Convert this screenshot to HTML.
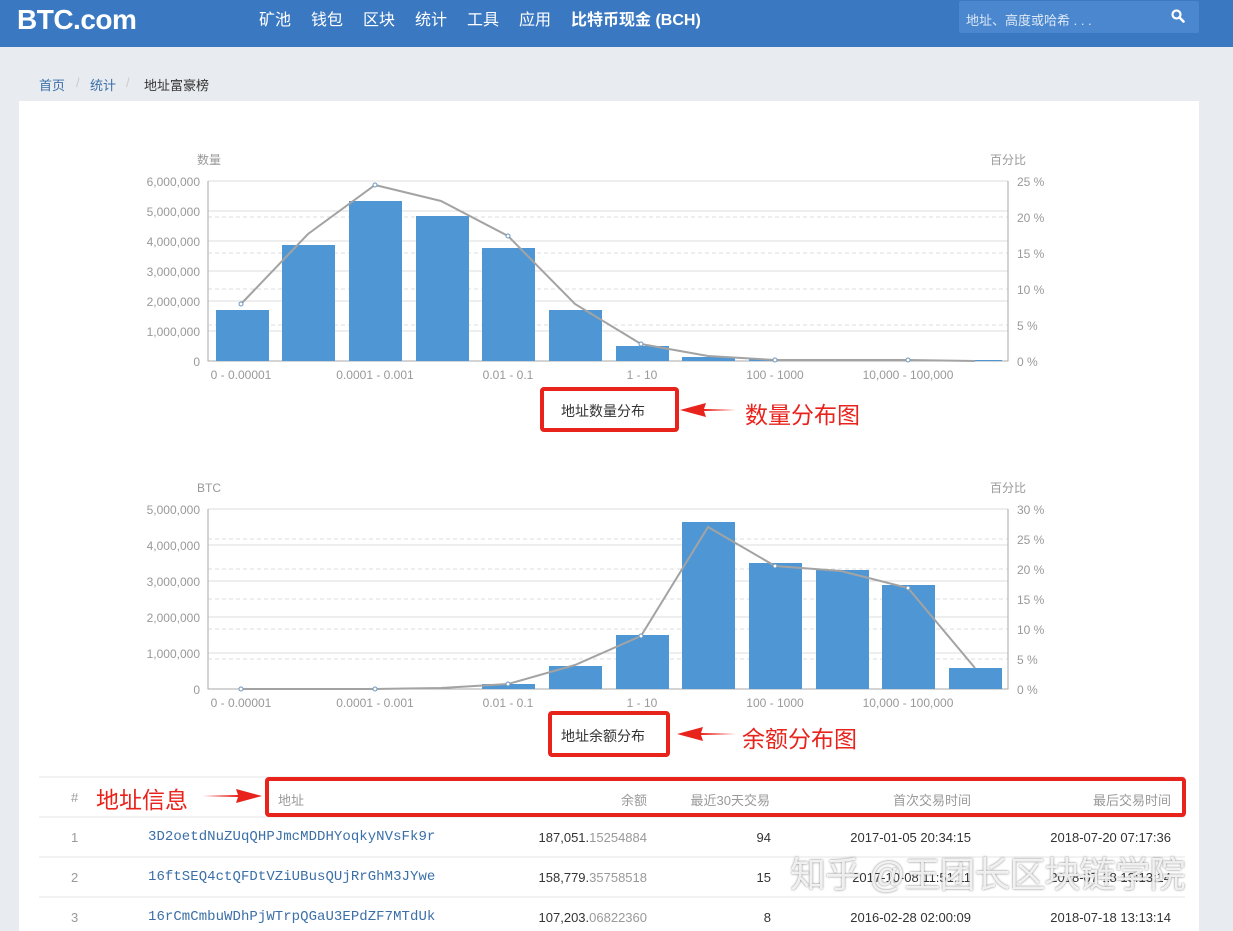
<!DOCTYPE html>
<html><head><meta charset="utf-8"><style>
*{margin:0;padding:0;box-sizing:border-box}
body{width:1233px;height:918px;overflow:hidden;background:#e8ebef;font-family:"Liberation Sans","Noto Sans CJK SC",sans-serif;position:relative}
.hdr{position:absolute;left:0;top:0;width:1233px;height:47px;background:#3b78c2}
.logo{position:absolute;left:17px;top:4px;color:#fff;font-weight:bold;font-size:28px;letter-spacing:-0.5px}
.nav{position:absolute;top:6px;color:#fff;font-size:16px}
.search{position:absolute;left:959px;top:1px;width:240px;height:32px;background:#4a87cf;border-radius:2px;color:#dde8f5;font-size:13px;padding:9px 0 0 7px}
.bc{position:absolute;top:75px;font-size:13px}
.card{position:absolute;left:19px;top:101px;width:1180px;height:830px;background:#fff}
.t{position:absolute;font-size:13px;color:#333;white-space:nowrap}
.r{text-align:right}
.red{position:absolute;border:4px solid #e8231c;border-radius:4px}
.rt{position:absolute;color:#e8231c;font-size:23px}
.g{color:#999}
.addr{color:#3b6fa8;font-family:"Liberation Mono",monospace;font-size:14px;letter-spacing:0.05px}
</style></head><body>
<div class="hdr">
<div class="logo">BTC.com</div>
<div class="nav" style="left:259px">矿池</div>
<div class="nav" style="left:311px">钱包</div>
<div class="nav" style="left:363px">区块</div>
<div class="nav" style="left:415px">统计</div>
<div class="nav" style="left:467px">工具</div>
<div class="nav" style="left:519px">应用</div>
<div class="nav" style="left:571px;font-weight:bold">比特币现金 (BCH)</div>
<div class="search">地址、高度或哈希 . . .
<svg style="position:absolute;left:212px;top:8px" width="14" height="14" viewBox="0 0 14 14"><circle cx="5.5" cy="5.5" r="4" fill="none" stroke="#fff" stroke-width="2.2"/><path d="M8.5 8.5L12.5 12.5" stroke="#fff" stroke-width="2.6" stroke-linecap="round"/></svg></div>
</div>
<div class="bc" style="left:39px;color:#3b6fa8">首页</div>
<div class="bc" style="left:76px;color:#ccc">/</div>
<div class="bc" style="left:90px;color:#3b6fa8">统计</div>
<div class="bc" style="left:126px;color:#ccc">/</div>
<div class="bc" style="left:144px;color:#333">地址富豪榜</div>
<div class="card"></div>

<svg style="position:absolute;left:0;top:0" width="1233" height="918" font-family="Liberation Sans, Noto Sans CJK SC, sans-serif" font-size="12" fill="#999">
<text x="197" y="164">数量</text><text x="990" y="164">百分比</text>
<g stroke="#ddd"><path d="M208 181H1008M208 211H1008M208 241H1008M208 271H1008M208 301H1008M208 331H1008"/></g>
<g stroke="#ddd" stroke-dasharray="4 3"><path d="M208 217H1008M208 253H1008M208 289H1008M208 325H1008"/></g>
<path d="M208 181V361H1008V181" stroke="#aaa" fill="none"/>
<g text-anchor="end"><text x="200" y="186">6,000,000</text><text x="200" y="216">5,000,000</text><text x="200" y="246">4,000,000</text><text x="200" y="276">3,000,000</text><text x="200" y="306">2,000,000</text><text x="200" y="336">1,000,000</text><text x="200" y="366">0</text></g>
<g><text x="1017" y="186">25 %</text><text x="1017" y="222">20 %</text><text x="1017" y="258">15 %</text><text x="1017" y="294">10 %</text><text x="1017" y="330">5 %</text><text x="1017" y="366">0 %</text></g>
<g fill="#4f97d4"><rect x="216" y="310" width="53" height="51"/><rect x="282" y="245" width="53" height="116"/><rect x="349" y="201" width="53" height="160"/><rect x="416" y="216" width="53" height="145"/><rect x="482" y="248" width="53" height="113"/><rect x="549" y="310" width="53" height="51"/><rect x="616" y="346" width="53" height="15"/><rect x="682" y="357" width="53" height="4"/><rect x="749" y="359" width="53" height="2"/><rect x="816" y="360" width="53" height="1"/><rect x="882" y="360" width="53" height="1"/><rect x="949" y="360" width="53" height="1"/></g>
<polyline points="241,304 308,234 375,185 441,201 508,236 575,304 641,344 708,356 775,360 841,360 908,360 975,361" fill="none" stroke="#a3a3a3" stroke-width="2"/>
<g fill="#fff" stroke="#6a95bd"><circle cx="241" cy="304" r="2"/><circle cx="375" cy="185" r="2"/><circle cx="508" cy="236" r="2"/><circle cx="641" cy="344" r="2"/><circle cx="775" cy="360" r="2"/><circle cx="908" cy="360" r="2"/></g>
<g text-anchor="middle"><text x="241" y="379">0 - 0.00001</text><text x="375" y="379">0.0001 - 0.001</text><text x="508" y="379">0.01 - 0.1</text><text x="642" y="379">1 - 10</text><text x="775" y="379">100 - 1000</text><text x="908" y="379">10,000 - 100,000</text></g>
<text x="197" y="492">BTC</text><text x="990" y="492">百分比</text>
<g stroke="#ddd"><path d="M208 509H1008M208 545H1008M208 581H1008M208 617H1008M208 653H1008"/></g>
<g stroke="#ddd" stroke-dasharray="4 3"><path d="M208 539H1008M208 569H1008M208 599H1008M208 629H1008M208 659H1008"/></g>
<path d="M208 509V689H1008V509" stroke="#aaa" fill="none"/>
<g text-anchor="end"><text x="200" y="514">5,000,000</text><text x="200" y="550">4,000,000</text><text x="200" y="586">3,000,000</text><text x="200" y="622">2,000,000</text><text x="200" y="658">1,000,000</text><text x="200" y="694">0</text></g>
<g><text x="1017" y="514">30 %</text><text x="1017" y="544">25 %</text><text x="1017" y="574">20 %</text><text x="1017" y="604">15 %</text><text x="1017" y="634">10 %</text><text x="1017" y="664">5 %</text><text x="1017" y="694">0 %</text></g>
<g fill="#4f97d4"><rect x="482" y="684" width="53" height="5"/><rect x="549" y="666" width="53" height="23"/><rect x="616" y="635" width="53" height="54"/><rect x="682" y="522" width="53" height="167"/><rect x="749" y="563" width="53" height="126"/><rect x="816" y="570" width="53" height="119"/><rect x="882" y="585" width="53" height="104"/><rect x="949" y="668" width="53" height="21"/></g>
<polyline points="241,689 308,689 375,689 441,688 508,684 575,665 641,636 708,527 775,566 841,571 908,588 975,668" fill="none" stroke="#a3a3a3" stroke-width="2"/>
<g fill="#fff" stroke="#6a95bd"><circle cx="241" cy="689" r="2"/><circle cx="375" cy="689" r="2"/><circle cx="508" cy="684" r="2"/><circle cx="641" cy="636" r="2"/><circle cx="775" cy="566" r="2"/><circle cx="908" cy="588" r="2"/></g>
<g text-anchor="middle"><text x="241" y="707">0 - 0.00001</text><text x="375" y="707">0.0001 - 0.001</text><text x="508" y="707">0.01 - 0.1</text><text x="642" y="707">1 - 10</text><text x="775" y="707">100 - 1000</text><text x="908" y="707">10,000 - 100,000</text></g>
<g fill="#e8231c"><path d="M680 410L706 403L704 409L736 410L704 411L706 417Z"/><path d="M677 734L703 727L701 733L736 734L701 735L703 741Z"/><path d="M262 796L236 789L238 795L203 796L238 797L236 803Z"/></g>
<g stroke="#e6e6e6"><path d="M39 777H1185M39 817H1185M39 857H1185M39 897H1185"/></g>
</svg>

<div class="red" style="left:540px;top:387px;width:139px;height:45px"></div>
<div class="t" style="left:561px;top:401px;font-size:14px">地址数量分布</div>
<div class="rt" style="left:745px;top:396px">数量分布图</div>
<div class="red" style="left:548px;top:711px;width:122px;height:46px"></div>
<div class="t" style="left:561px;top:726px;font-size:14px">地址余额分布</div>
<div class="rt" style="left:742px;top:720px">余额分布图</div>
<div class="rt" style="left:96px;top:781px">地址信息</div>
<div class="red" style="left:265px;top:777px;width:921px;height:40px"></div>

<div class="t g" style="left:71px;top:790px">#</div>
<div class="t g" style="left:278px;top:790px">地址</div>
<div class="t g r" style="left:547px;width:100px;top:790px">余额</div>
<div class="t g r" style="left:670px;width:100px;top:790px">最近30天交易</div>
<div class="t g r" style="left:871px;width:100px;top:790px">首次交易时间</div>
<div class="t g r" style="left:1071px;width:100px;top:790px">最后交易时间</div>

<div class="t g" style="left:71px;top:830px">1</div>
<div class="t addr" style="left:148px;top:829px">3D2oetdNuZUqQHPJmcMDDHYoqkyNVsFk9r</div>
<div class="t r" style="left:447px;width:200px;top:830px">187,051.<span class="g">15254884</span></div>
<div class="t r" style="left:670px;width:101px;top:830px">94</div>
<div class="t r" style="left:771px;width:200px;top:830px">2017-01-05 20:34:15</div>
<div class="t r" style="left:971px;width:200px;top:830px">2018-07-20 07:17:36</div>

<div class="t g" style="left:71px;top:870px">2</div>
<div class="t addr" style="left:148px;top:869px">16ftSEQ4ctQFDtVZiUBusQUjRrGhM3JYwe</div>
<div class="t r" style="left:447px;width:200px;top:870px">158,779.<span class="g">35758518</span></div>
<div class="t r" style="left:670px;width:101px;top:870px">15</div>
<div class="t r" style="left:771px;width:200px;top:870px">2017-10-08 11:51:11</div>
<div class="t r" style="left:971px;width:200px;top:870px">2018-07-18 13:13:14</div>

<div class="t g" style="left:71px;top:910px">3</div>
<div class="t addr" style="left:148px;top:909px">16rCmCmbuWDhPjWTrpQGaU3EPdZF7MTdUk</div>
<div class="t r" style="left:447px;width:200px;top:910px">107,203.<span class="g">06822360</span></div>
<div class="t r" style="left:670px;width:101px;top:910px">8</div>
<div class="t r" style="left:771px;width:200px;top:910px">2016-02-28 02:00:09</div>
<div class="t r" style="left:971px;width:200px;top:910px">2018-07-18 13:13:14</div>

<div class="t" style="left:790px;top:846px;font-size:36px;letter-spacing:-1px;color:rgba(255,255,255,0.85);text-shadow:0 0 2px #777">知乎 @王团长区块链学院</div>
</body></html>
